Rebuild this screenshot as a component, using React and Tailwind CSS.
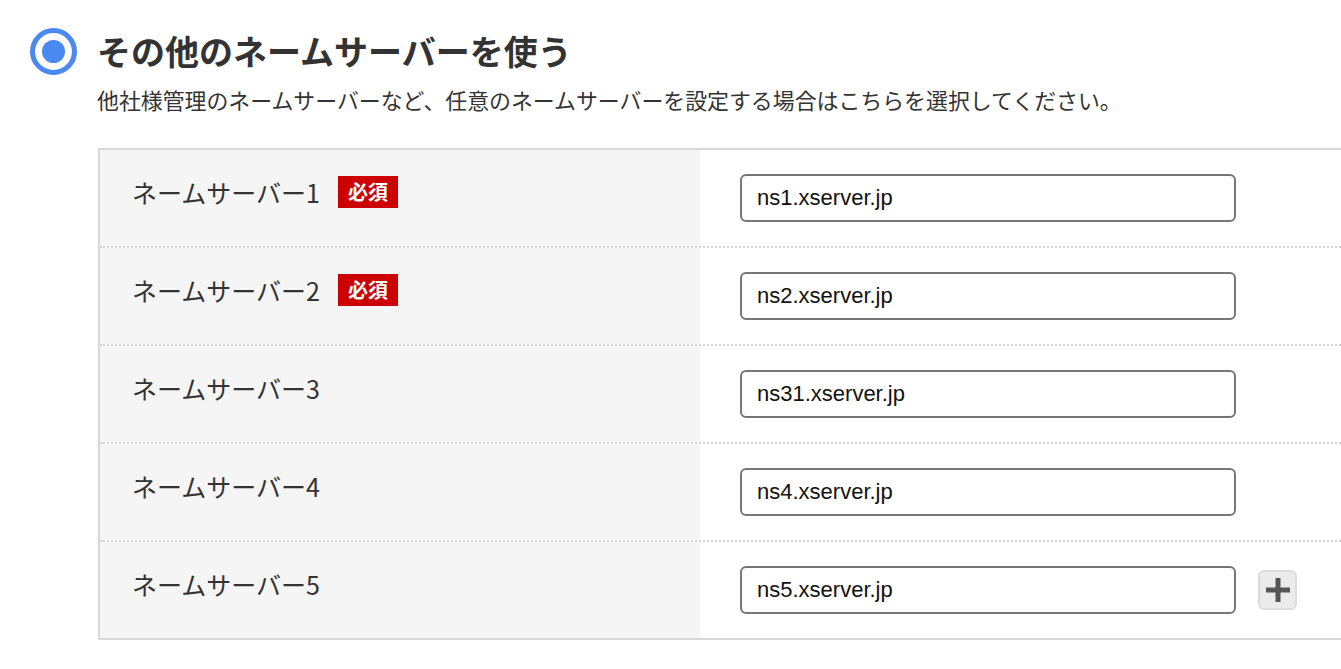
import React from 'react';

const JP = { fontFamily: '"Noto Sans CJK JP", "Noto Sans", sans-serif' };

const servers = [
  { label: 'ネームサーバー1', value: 'ns1.xserver.jp', required: true },
  { label: 'ネームサーバー2', value: 'ns2.xserver.jp', required: true },
  { label: 'ネームサーバー3', value: 'ns31.xserver.jp' },
  { label: 'ネームサーバー4', value: 'ns4.xserver.jp' },
  { label: 'ネームサーバー5', value: 'ns5.xserver.jp', addButton: true },
];

const PlusIcon = () => (
  <svg width="24" height="24" viewBox="0 0 24 24">
    <rect x="0" y="9.5" width="24" height="5" fill="#555" />
    <rect x="9.5" y="0" width="5" height="24" fill="#555" />
  </svg>
);

const ServerRow = ({ label, value, required, addButton, last }) => (
  <div
    className={`flex ${last ? '' : 'border-b-2 border-dotted border-[#d4d4d4]'}`}
  >
    <div className="w-[600px] shrink-0 bg-[#f5f5f5] pl-[32px] pt-[24px] pb-[24px] flex items-start">
      <div className="flex items-center h-[36px] gap-[18px]">
        <span className="text-[25px] leading-[36px] text-[#333]" style={JP}>{label}</span>
        {required && (
          <span
            className="w-[60px] h-[32px] bg-[#cc0000] text-white text-[20px] font-bold leading-[32px] text-center"
            style={JP}
          >
            必須
          </span>
        )}
      </div>
    </div>
    <div className="flex-1 bg-white pl-[40px] py-[24px] flex items-center gap-[22px]">
      <input
        readOnly
        value={value}
        className="w-[496px] h-[48px] border-2 border-[#777] rounded-[6px] px-[15px] text-[22px] text-[#111] outline-none"
        style={{ fontFamily: '"Liberation Sans", Arial, sans-serif' }}
      />
      {addButton && (
        <button className="w-[39px] h-[40px] bg-[#ebebeb] border-2 border-[#dcdcdc] rounded-[6px] flex items-center justify-center">
          <PlusIcon />
        </button>
      )}
    </div>
  </div>
);

export default function App() {
  return (
    <div className="w-[1341px] h-[669px] overflow-hidden bg-white text-[#333]" style={JP}>
      <div className="pl-[30px] pt-[27px] flex items-center gap-[20px]">
        <div className="w-[47px] h-[47px] rounded-full border-[5px] border-[#4a88f2] flex items-center justify-center">
          <div className="w-[23px] h-[23px] rounded-full bg-[#4a88f2]" />
        </div>
        <h1 className="text-[34px] leading-[48px] font-bold text-[#333]">その他のネームサーバーを使う</h1>
      </div>
      <p className="ml-[97px] mt-[10px] text-[21.9px] leading-[30px] text-[#333]">
        他社様管理のネームサーバーなど、任意のネームサーバーを設定する場合はこちらを選択してください。
      </p>
      <div className="ml-[98px] mt-[33px] w-[1320px] border-2 border-[#d8d8d8]">
        {servers.map((s, i) => (
          <ServerRow key={s.label} {...s} last={i === servers.length - 1} />
        ))}
      </div>
    </div>
  );
}
